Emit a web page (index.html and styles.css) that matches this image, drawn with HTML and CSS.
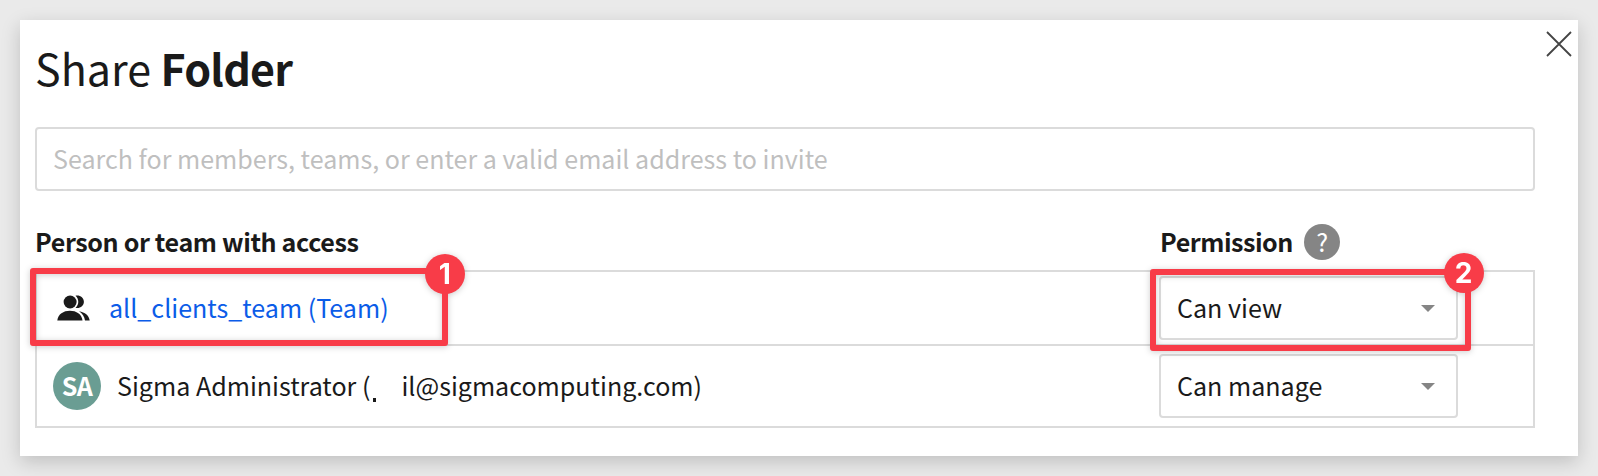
FILE: index.html
```
<!DOCTYPE html>
<html lang="en">
<head>
<meta charset="utf-8">
<title>Share Folder</title>
<link rel="stylesheet" href="styles.css">
</head>
<body>
<main class="dialog">
  <svg class="close" viewBox="0 0 26 26"><path d="M1 1 25 25M25 1 1 25"/></svg>
  <h1 class="title">Share <b>Folder</b></h1>
  <div class="search">Search for members, teams, or enter a valid email address to invite</div>
  <div class="heads">
    <span class="head-person">Person or team with access</span>
    <span class="head-perm">Permission</span>
    <span class="help">?</span>
  </div>
  <div class="table">
    <div class="row row-team">
      <svg class="people" viewBox="0 0 33 26">
        <circle cx="13.1" cy="7" r="6.5"/>
        <path d="M.3 25.6C1 19 6.500 15.700 12.900 15.700S24.800 19 25.500 25.600Z"/>
        <path d="M18.500.700C23 -.200 26.900 2.800 26.900 6.800S23 13.900 18.500 12.900C22.200 9.700 22.200 4 18.500.700Z"/>
        <path d="M22 16.300C28 17.300 32 20.400 32.700 25.600H28C27.500 21.700 25.300 18.500 22 16.300Z"/>
      </svg>
      <span class="link">all_clients_team (Team)</span>
      <div class="select"><span class="value">Can view</span><svg class="caret" viewBox="0 0 14 7"><path d="M0 0H14L7 7Z"/></svg></div>
      <div class="mark mark-one"><span class="num">1</span></div>
      <div class="mark mark-two"><span class="num">2</span></div>
    </div>
    <div class="row row-admin">
      <span class="avatar">SA</span>
      <span class="name">Sigma Administrator (</span><i class="dot"></i><span class="mail">il@sigmacomputing.com)</span>
      <div class="select"><span class="value">Can manage</span><svg class="caret" viewBox="0 0 14 7"><path d="M0 0H14L7 7Z"/></svg></div>
    </div>
  </div>
</main>
</body>
</html>
```

FILE: styles.css
```
* { box-sizing: border-box; }
body {
  margin: 0;
  height: 476px;
  padding: 20px;
  overflow: hidden;
  background: #eaeaea;
  color: #1a1a1a;
  font: 25.07px/36px "Noto Sans CJK SC", "Noto Sans", sans-serif;
  white-space: nowrap;
}
.dialog {
  position: relative;
  width: 1558px;
  height: 436px;
  padding: 0 43px 0 15px;
  background: #fff;
  box-shadow: 0 6px 18px rgba(0, 0, 0, .18);
}
.close {
  position: absolute;
  top: 11px;
  right: 6px;
  width: 26px;
  height: 26px;
  fill: none;
  stroke: #444;
  stroke-width: 1.8;
}
.title {
  margin: 0;
  height: 107px;
  padding-top: 17px;
  font-size: 43px;
  font-weight: 400;
  line-height: 60px;
}
.title b { font-weight: 700; letter-spacing: -.75px; }
.search {
  height: 64px;
  padding: 11px 16px;
  border: 2px solid #dbdbdb;
  border-radius: 4px;
  color: #bfbfbf;
}
.heads {
  display: flex;
  align-items: center;
  height: 79px;
  padding-top: 23px;
  font-weight: 700;
  letter-spacing: -.37px;
}
.head-person { width: 1125px; padding-bottom: 2px; }
.head-perm { width: 143.700px; padding-bottom: 2px; letter-spacing: -.46px; }
.help {
  width: 36.6px;
  height: 36.6px;
  border-radius: 50%;
  background: #858585;
  color: #fff;
  font-weight: 400;
  line-height: 34px;
  text-align: center;
}
.table { border: 2px solid #dbdbdb; }
.row {
  position: relative;
  display: flex;
  align-items: center;
  height: 72px;
  padding: 0 75px 0 19.500px;
}
.row-team { z-index: 1; }
.row-admin {
  height: 82px;
  padding-left: 16px;
  border-top: 2px solid #dbdbdb;
}
.people { width: 33px; height: 26px; margin-right: 19.500px; fill: #1a1a1a; }
.link, .name, .mail, .value { padding-bottom: 2px; }
.link { color: #0b5ce8; }
.select {
  display: flex;
  align-items: center;
  justify-content: space-between;
  width: 299px;
  height: 64px;
  margin-left: auto;
  padding: 0 21px 0 16px;
  border: 2px solid #dbdbdb;
  border-radius: 4px;
}
.caret { width: 14px; height: 7px; fill: #858585; }
.avatar {
  width: 48px;
  height: 48px;
  margin-right: 16px;
  border-radius: 50%;
  background: #6a9d93;
  color: #fff;
  font-weight: 700;
  letter-spacing: -.6px;
  line-height: 47px;
  text-align: center;
}
.dot { width: 3px; height: 4px; margin: 28px 25.500px 0 2.500px; background: #1a1a1a; }
.mark {
  position: absolute;
  border: 6px solid #f83c48;
  border-radius: 3px;
  filter: drop-shadow(0 1px 3px rgba(0, 0, 0, .2));
}
.mark-one { left: -7.400px; top: -4px; width: 418px; height: 78px; }
.mark-two { left: 1113px; top: -3px; width: 321px; height: 81.500px; }
.num {
  position: absolute;
  top: -20px;
  right: -23.200px;
  width: 40px;
  height: 40px;
  border-radius: 50%;
  background: #f83c48;
  color: #fff;
  font: 700 28px/40px Inter, sans-serif;
  text-align: center;
}
.mark-two .num { top: -22.500px; right: -18.700px; }
```
